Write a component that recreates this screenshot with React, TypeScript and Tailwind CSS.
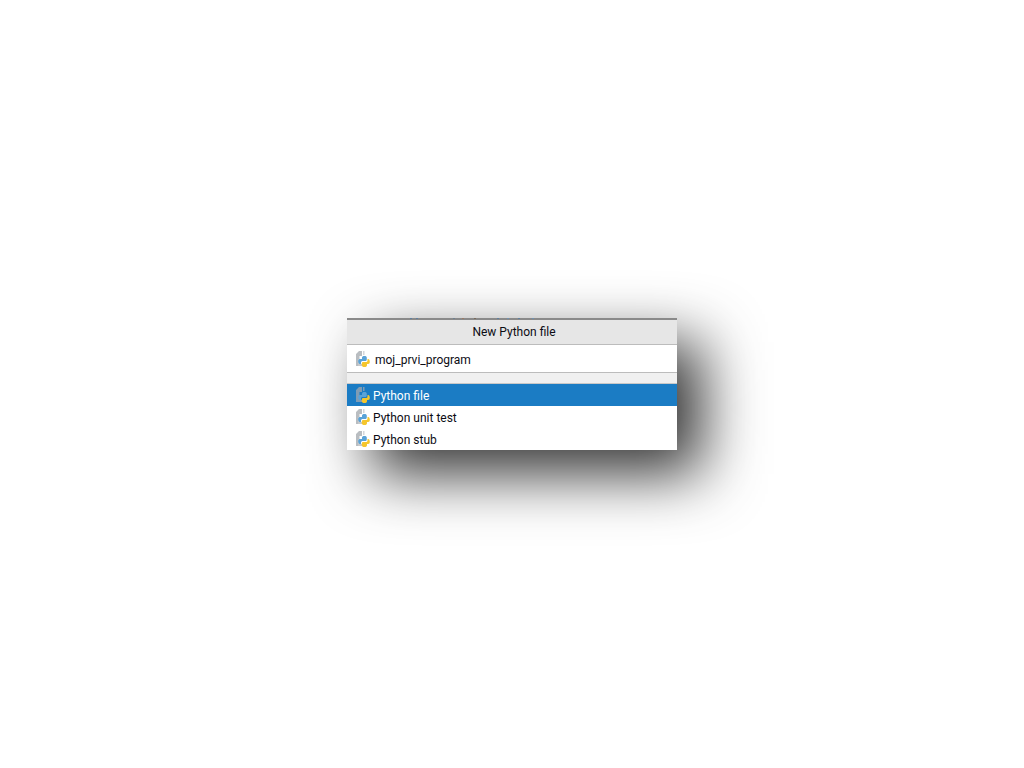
import React from "react";

const PyIcon = ({ selected = false }: { selected?: boolean }) => (
  <svg width="14" height="16" viewBox="0 0 14 16" className="shrink-0">
    <path d="M3 0h3v5H3.500v3H2v7H0V3z" fill={selected ? "#7f9cb4" : "#b9bdc1"} />
    <path d="M2 8h2v5h2v2H2z" fill={selected ? "#7f9cb4" : "#c6c9cc"} />
    <path d="M7 0h1.500v4H7z" fill={selected ? "#7f9cb4" : "#d4d6d9"} />
    <path
      d="M8.500 5C6.800 5 6 5.600 6 6.800V8H3.800C2.800 8 2.200 9 2.200 10.300S2.800 13 3.800 13H5v-1.500C5 10.600 5.700 10 6.800 10h2.500c.9 0 1.500-.6 1.500-1.500V6.800C10.800 5.600 10 5 8.500 5z"
      fill="#5aa3d8"
    />
    <path
      d="M8.500 16c1.700 0 2.500-.6 2.500-1.800V13h1.200c1 0 1.600-1 1.600-2.300S13.200 8 12.200 8h-.7v1.400c0 .9-.7 1.600-1.800 1.600H7.200c-.9 0-1.400.6-1.400 1.500v1.700C5.800 15.400 6.800 16 8.500 16z"
      fill="#f5c62c"
    />
  </svg>
);

const rows = ["Python file", "Python unit test", "Python stub"];

// leftovers of the text behind the popup, showing over its top edge
const marks = [
  [63, "#5f7f9f"],
  [69, "#5f7f9f"],
  [106, "#6f7f8f"],
  [115, "#9a7a66"],
  [127, "#7a6a5a"],
  [150, "#5f7f9f"],
  [160, "#6f8faf"],
  [171, "#5f7f9f"],
  [185, "#6f8faf"],
] as const;

export default function App() {
  return (
    <div className="w-[1024px] h-[768px] bg-white pl-[347px] pt-[318px] overflow-hidden font-['Roboto','Noto_Sans',sans-serif] text-[12px] text-[#0c0c14]">
      <div className="relative w-[330px] bg-white border-t-2 border-[#8a8a8a] shadow-[25px_24px_60px_rgba(0,0,0,0.8)]">
        <svg width="330" height="1" className="absolute left-0 -top-[2px]">
          {marks.map(([x, color]) => (
            <rect key={x} x={x} y="0" width="2" height="1" fill={color} />
          ))}
        </svg>

        {/* Title */}
        <div className="h-[25px] bg-[#e6e6e6] border-b border-[#bcbcbc] flex items-center justify-center pl-[4px]">
          New Python file
        </div>

        {/* Name input */}
        <div className="h-[28px] border-b border-[#bcbcbc] flex items-center gap-[5px] pl-[9px]">
          <PyIcon />
          <span className="pt-[2px]">moj_prvi_program</span>
        </div>

        {/* Separator */}
        <div className="h-[11px] bg-[#f0f0f0] border-b border-[#c8c8c8]" />

        {/* Template list */}
        {rows.map((row, i) => (
          <div
            key={row}
            className={
              i === 0
                ? "h-[22px] flex items-center gap-[3px] pl-[9px] bg-[#1b7cc4] text-white"
                : "h-[22px] flex items-center gap-[3px] pl-[9px]"
            }
          >
            <PyIcon selected={i === 0} />
            <span className="pt-[2px]">{row}</span>
          </div>
        ))}
      </div>
    </div>
  );
}
